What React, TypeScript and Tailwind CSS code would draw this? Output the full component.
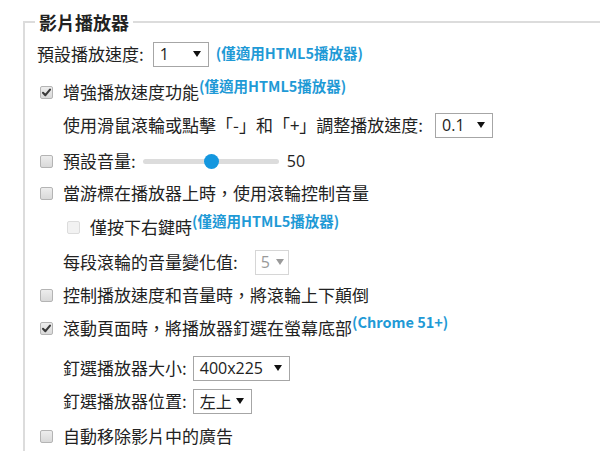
import React from "react";

const FONT = "font-['Microsoft_JhengHei','Noto_Sans_CJK_TC',sans-serif]";
const LATIN = "font-['Open_Sans','Noto_Sans',sans-serif]";

function Checkbox({ checked = false, disabled = false }: { checked?: boolean; disabled?: boolean }) {
  return (
    <div
      className={`relative w-[13px] h-[13px] shrink-0 rounded-[2px] border ${
        disabled
          ? "border-[#dcdcdc] bg-[#f2f2f2]"
          : "border-[#b4b4b4] bg-gradient-to-b from-[#ededed] to-[#d9d9d9]"
      }`}
    >
      {checked && (
        <svg viewBox="0 0 13 13" className="absolute -left-[1px] -top-[1px] w-[13px] h-[13px]">
          <path d="M3 6.8 L5.4 9.2 L10 3.6" fill="none" stroke="#3a3a3a" strokeWidth="2.1" strokeLinecap="round" strokeLinejoin="round" />
        </svg>
      )}
    </div>
  );
}

function Select({
  value,
  w,
  disabled = false,
  cjk = false,
  pad = "pl-[6px] pr-[7px]",
}: {
  value: string;
  w: string;
  disabled?: boolean;
  cjk?: boolean;
  pad?: string;
}) {
  return (
    <div
      className={`${w} ${pad} h-[25px] flex items-center justify-between border bg-white ${
        disabled ? "border-[#d6d6d6] text-[#9a9a9a]" : "border-[#a6a6a6] text-[#222]"
      }`}
    >
      <span className={`${cjk ? FONT : LATIN} text-[16px] leading-[20px]`}>{value}</span>
      <svg viewBox="0 0 8 6" className="w-[8px] h-[6px] shrink-0">
        <path d="M0 0 H8 L4 6 Z" fill={disabled ? "#9a9a9a" : "#111"} />
      </svg>
    </div>
  );
}

const Blue = ({ children, sup = false }: { children: React.ReactNode; sup?: boolean }) => (
  <span
    className={`${FONT} font-bold text-[14.5px] leading-[14px] text-[#1f9ad6] ${sup ? "self-start" : ""}`}
  >
    {children}
  </span>
);

export default function App() {
  return (
    <div className={`w-[600px] h-[451px] overflow-hidden bg-white text-[#222] ${FONT} text-[17px] leading-[24px]`}>
      <fieldset className="ml-[23px] mt-[10px] w-[640px] border-2 border-[#dcdcdc] pl-[10px] pb-[40px]">
        <legend className="px-[4px] text-[18px] leading-[24px] font-bold text-[#222]">影片播放器</legend>

        {/* Row 1 */}
        <div className="mt-[7px] h-[26px] flex items-center pl-[2px]">
          <span>預設播放速度:</span>
          <div className="ml-[9px]">
            <Select value="1" w="w-[56px]" />
          </div>
          <span className="ml-[7px] relative -top-[2px]">
            <Blue>(僅適用HTML5播放器)</Blue>
          </span>
        </div>

        {/* Row 2 */}
        <div className="mt-[12px] h-[26px] flex items-center pl-[5px]">
          <Checkbox checked />
          <span className="ml-[10px]">增強播放速度功能</span>
          <Blue sup>(僅適用HTML5播放器)</Blue>
        </div>

        {/* Row 3 */}
        <div className="mt-[7px] h-[26px] flex items-center pl-[28px]">
          <span>使用滑鼠滾輪或點擊「-」和「+」調整播放速度:</span>
          <div className="ml-[12px]">
            <Select value="0.1" w="w-[58px]" />
          </div>
        </div>

        {/* Row 4 */}
        <div className="mt-[10px] h-[26px] flex items-center pl-[5px]">
          <Checkbox />
          <span className="ml-[10px]">預設音量:</span>
          <div className="ml-[7px] relative w-[136px] h-[15px] flex items-center">
            <div className="w-full h-[5px] rounded-full bg-[#dcdcdc]" />
            <div className="absolute left-[61px] top-0 w-[15px] h-[15px] rounded-full bg-[#1497df]" />
          </div>
          <span className={`ml-[8px] ${LATIN} text-[16px]`}>50</span>
        </div>

        {/* Row 5 */}
        <div className="mt-[6px] h-[26px] flex items-center pl-[5px]">
          <Checkbox />
          <span className="ml-[10px]">當游標在播放器上時，使用滾輪控制音量</span>
        </div>

        {/* Row 6 */}
        <div className="mt-[8px] h-[26px] flex items-center pl-[32px]">
          <Checkbox disabled />
          <span className="ml-[10px]">僅按下右鍵時</span>
          <Blue sup>(僅適用HTML5播放器)</Blue>
        </div>

        {/* Row 7 */}
        <div className="mt-[9px] h-[26px] flex items-center pl-[28px]">
          <span>每段滾輪的音量變化值:</span>
          <div className="ml-[17px]">
            <Select value="5" w="w-[34px]" disabled pad="pl-[5px] pr-[4px]" />
          </div>
        </div>

        {/* Row 8 */}
        <div className="mt-[7px] h-[26px] flex items-center pl-[5px]">
          <Checkbox />
          <span className="ml-[10px]">控制播放速度和音量時，將滾輪上下顛倒</span>
        </div>

        {/* Row 9 */}
        <div className="mt-[7px] h-[26px] flex items-center pl-[5px]">
          <Checkbox checked />
          <span className="ml-[10px]">滾動頁面時，將播放器釘選在螢幕底部</span>
          <Blue sup>(Chrome 51+)</Blue>
        </div>

        {/* Row 10 */}
        <div className="mt-[14px] h-[26px] flex items-center pl-[28px]">
          <span>釘選播放器大小:</span>
          <div className="ml-[6px]">
            <Select value="400x225" w="w-[97px]" />
          </div>
        </div>

        {/* Row 11 */}
        <div className="mt-[7px] h-[26px] flex items-center pl-[28px]">
          <span>釘選播放器位置:</span>
          <div className="ml-[6px]">
            <Select value="左上" w="w-[59px]" cjk />
          </div>
        </div>

        {/* Row 12 */}
        <div className="mt-[9px] h-[26px] flex items-center pl-[5px]">
          <Checkbox />
          <span className="ml-[10px]">自動移除影片中的廣告</span>
        </div>
      </fieldset>
    </div>
  );
}
